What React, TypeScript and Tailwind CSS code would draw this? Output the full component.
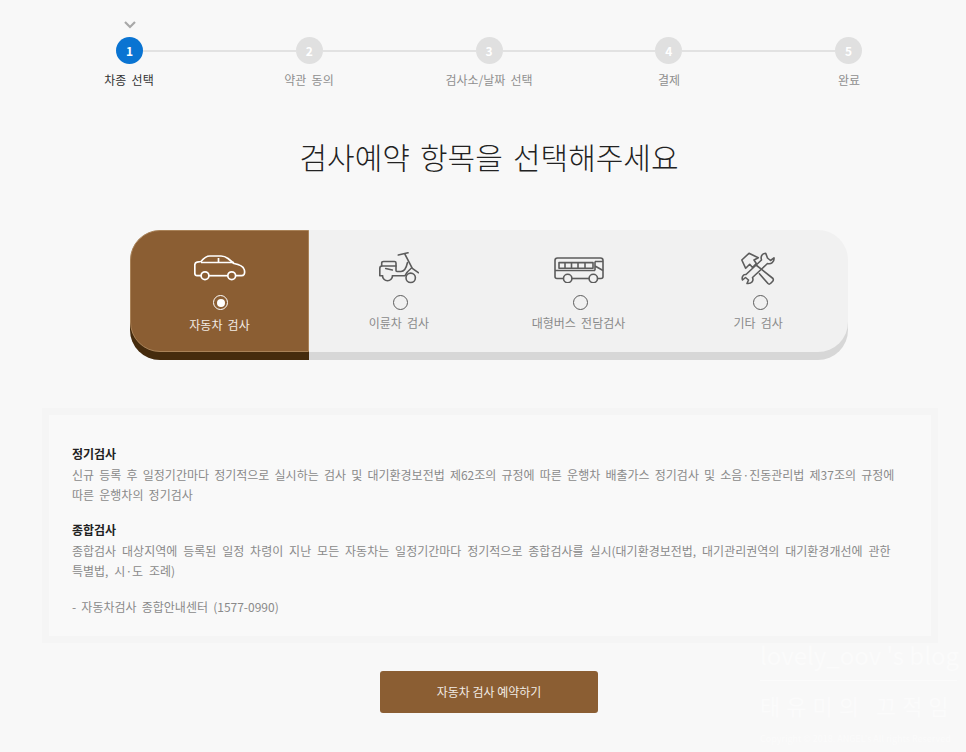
const font = "font-['Noto_Sans_CJK_KR','Noto_Sans',sans-serif]";

const steps = [
  { no: 1, label: "차종 선택" },
  { no: 2, label: "약관 동의" },
  { no: 3, label: "검사소/날짜 선택" },
  { no: 4, label: "결제" },
  { no: 5, label: "완료" },
];

function CarIcon() {
  return (
    <svg width="52" height="26" viewBox="0 0 52 26" fill="none" stroke="currentColor" strokeWidth="1.7" strokeLinejoin="round">
      <path d="M7 20.7H3C1.5 20.7 0.8 19.5 0.8 18V10C0.8 8.5 1.5 7.5 3 7.2L7 6.5C9 4 11.5 1 16 1H27C30 1 32 2 34 3.5L40 8.5C45 9.5 49 11 50 14C50.8 16 50.8 18 50 19.5C49.5 20.3 48.5 20.7 47.5 20.7H42" />
      <path d="M15 20.7H33.5" />
      <circle cx="11" cy="20.7" r="3.9" />
      <circle cx="37.7" cy="20.7" r="3.9" />
      <path d="M7 7.5H40M24.5 3V7.5" />
    </svg>
  );
}

function ScooterIcon() {
  return (
    <svg width="40" height="32" viewBox="0 0 40 32" fill="none" stroke="currentColor" strokeWidth="1.6" strokeLinejoin="round" strokeLinecap="round">
      <path d="M2.7 14V11C2.7 10 3.5 9.5 4.5 9.5H15.5C16.5 9.5 17 10 17 11V18.5C17 19 17.5 19.5 18 19.5H22C25 19.5 27.5 15 28.5 10.5" />
      <path d="M17 14H3C1.5 14 0.8 15 0.8 16.5V23.7H3.5" />
      <path d="M13.5 23.7H26C27.5 20 30 18 32.5 16" />
      <path d="M3.5 23.7A5 5 0 0 0 13.5 23.7" />
      <path d="M6.7 16.5L13.3 18" />
      <path d="M19.3 3L29 0.8" />
      <path d="M26 2.3L33.3 16.3L39.3 20.7" />
      <circle cx="31.7" cy="25.8" r="4.7" />
    </svg>
  );
}

function BusIcon() {
  return (
    <svg width="50" height="26" viewBox="0 0 50 26" fill="none" stroke="currentColor" strokeWidth="1.6" strokeLinejoin="round">
      <path d="M9.4 21.5H3C1.8 21.5 1 20.7 1 19.5V3.5C1 1.8 2 1 3.5 1H46.5C48 1 49 1.8 49 3.5V19.5C49 20.7 48.2 21.5 47 21.5H43.6" />
      <path d="M18 21.5H35" />
      <circle cx="13.7" cy="21.5" r="4.2" />
      <circle cx="39.3" cy="21.5" r="4.2" />
      <path d="M5 5.6H39V11.3H5Z" />
      <path d="M11 5.6V11.3M17.5 5.6V11.3M24 5.6V11.3M31 5.6V11.3" />
      <path d="M1 13.5H41" />
      <path d="M41 4.5V13.5M41 4.5H49M41 9L49 13.5" />
    </svg>
  );
}

function ToolsIcon() {
  return (
    <svg width="34" height="33" viewBox="0 0 34 33" fill="none" stroke="currentColor" strokeWidth="1.6" strokeLinejoin="round">
      <path d="M0.8 8L8 1.3L17.3 5.7L13 8L15.3 11.5L11.5 15.5L8.7 12.3L4.7 16.3Z" />
      <path d="M15 13L32 26.5C32.5 27.5 32.5 28.5 31.5 29.5L29.5 31.5C28.5 32.3 27.5 32 27 31.5L18 21.3" />
      <path d="M24.7 1.3C20.5 1.5 19.5 5 20.5 8L5 22.5C2 22 0.5 25.5 1.5 28L4.5 25.5L7.5 28L6 31.5C10.5 32 13 29 11.5 25.5L26.5 11.5C30 12.5 33.5 10 33 5.8L29.5 8.5L26.5 6Z" />
    </svg>
  );
}

const tabs = [
  { label: "자동차 검사", icon: <CarIcon />, active: true },
  { label: "이륜차 검사", icon: <ScooterIcon />, active: false },
  { label: "대형버스 전담검사", icon: <div className="mt-[3px]"><BusIcon /></div>, active: false },
  { label: "기타 검사", icon: <ToolsIcon />, active: false },
];

export default function App() {
  return (
    <div className={`relative h-[752px] overflow-hidden bg-[#f8f8f8] [word-spacing:2.5px] ${font}`}>
      {/* Stepper */}
      <div className="ml-[116px] w-[746px] pt-[14px]">
        <div className="relative flex h-[50px] items-end">
          <svg className="absolute left-[8px] top-[6px]" width="12" height="9" viewBox="0 0 12 9" fill="none" stroke="#a8a8a8" strokeWidth="2.2">
            <path d="M1 2L6 7L11 2" />
          </svg>
          {steps.map((s, i) => (
            <div key={s.no} className={`flex items-center ${i === 0 ? "" : "flex-1"}`}>
              {i > 0 && <div className="h-[2px] flex-1 bg-[#e2e2e2]" />}
              <div
                className={`flex h-[27px] w-[27px] shrink-0 items-center justify-center rounded-full text-[12px] font-bold text-white ${
                  s.no === 1 ? "bg-[#0a74d2]" : "bg-[#e0e0e0]"
                }`}
              >
                {s.no}
              </div>
            </div>
          ))}
        </div>
        <div className="mt-[7px] flex justify-between px-[13px]">
          {steps.map((s) => (
            <div key={s.no} className="flex w-0 justify-center">
              <span className={`whitespace-nowrap text-[12px] leading-[18px] ${s.no === 1 ? "text-[#333]" : "text-[#8f8f8f]"}`}>
                {s.label}
              </span>
            </div>
          ))}
        </div>
      </div>

      <h1 className="ml-[130px] mt-[43px] w-[718px] text-center text-[30px] font-light leading-[48px] text-[#222] [word-spacing:3.5px]">
        검사예약 항목을 선택해주세요
      </h1>

      {/* Tabs */}
      <div className="ml-[130px] mt-[50px] flex h-[122px] w-[718px] rounded-[30px] bg-[#f1f1f1] shadow-[0_8px_0_#d7d7d7]">
        {tabs.map((t) => (
          <div
            key={t.label}
            className={
              t.active
                ? "flex w-[179px] flex-col items-center rounded-l-[30px] border border-[#a98258] bg-[#8b5e33] pt-[20px] text-white shadow-[0_8px_0_#452b0d]"
                : "flex flex-1 flex-col items-center pt-[21px] text-[#5c5c5c]"
            }
          >
            <div className="flex h-[34px] items-center justify-center">{t.icon}</div>
            {t.active ? (
              <div className="ml-[2px] mt-[10px] flex h-[15px] w-[15px] items-center justify-center rounded-full border-[1.5px] border-white">
                <div className="h-[8px] w-[8px] rounded-full bg-white" />
              </div>
            ) : (
              <div className="ml-[4px] mt-[10px] h-[15px] w-[15px] rounded-full border-[1.5px] border-[#5c5c5c]" />
            )}
            <span className={`whitespace-nowrap text-[12px] leading-[18px] ${t.active ? "mt-[6px] text-[#f2ece5]" : "mt-[4px] text-[#8a8a8a]"}`}>
              {t.label}
            </span>
          </div>
        ))}
      </div>

      {/* Info box */}
      <div className="ml-[42px] mt-[56px] h-[235px] w-[896px] break-keep border-[7px] border-[#f5f5f5] bg-[#f9f9f9] px-[23px] pt-[29px] text-[12px] leading-[20px] text-[#8a8a8a]">
        <p className="font-bold text-[#222]">정기검사</p>
        <p className="mt-[1px]">
          신규 등록 후 일정기간마다 정기적으로 실시하는 검사 및 대기환경보전법 제62조의 규정에 따른 운행차 배출가스 정기검사 및 소음·진동관리법 제37조의 규정에 따른 운행차의 정기검사
        </p>
        <p className="mt-[15px] font-bold text-[#222]">종합검사</p>
        <p className="mt-[1px] [word-spacing:3.2px]">
          종합검사 대상지역에 등록된 일정 차령이 지난 모든 자동차는 일정기간마다 정기적으로 종합검사를 실시(대기환경보전법, 대기관리권역의 대기환경개선에 관한 특별법, 시·도 조례)
        </p>
        <p className="mt-[16px]">- 자동차검사 종합안내센터 (1577-0990)</p>
      </div>

      <button className="ml-[380px] mt-[28px] block h-[42px] w-[218px] rounded-[3px] bg-[#8b5e33] text-[12px] text-[#f2ece5]">
        자동차 검사 예약하기
      </button>

      {/* Watermark */}
      <div className="absolute left-[760px] top-[640px] w-[197px] text-[#fbfbfb] [word-spacing:0]">
        <div className="whitespace-nowrap border-b border-[#fbfbfb] pb-[10px] text-[24px] leading-[30px]">lovely_oov 's blog</div>
        <div className="mt-[3px] whitespace-nowrap text-[22px] leading-[42px] tracking-[6px]">태유미의 끄적임</div>
        <div className="mt-[7px] whitespace-nowrap text-[9px] leading-[12px]">Copyright © 2018. ANGEL's All rights Reserved</div>
      </div>
    </div>
  );
}
